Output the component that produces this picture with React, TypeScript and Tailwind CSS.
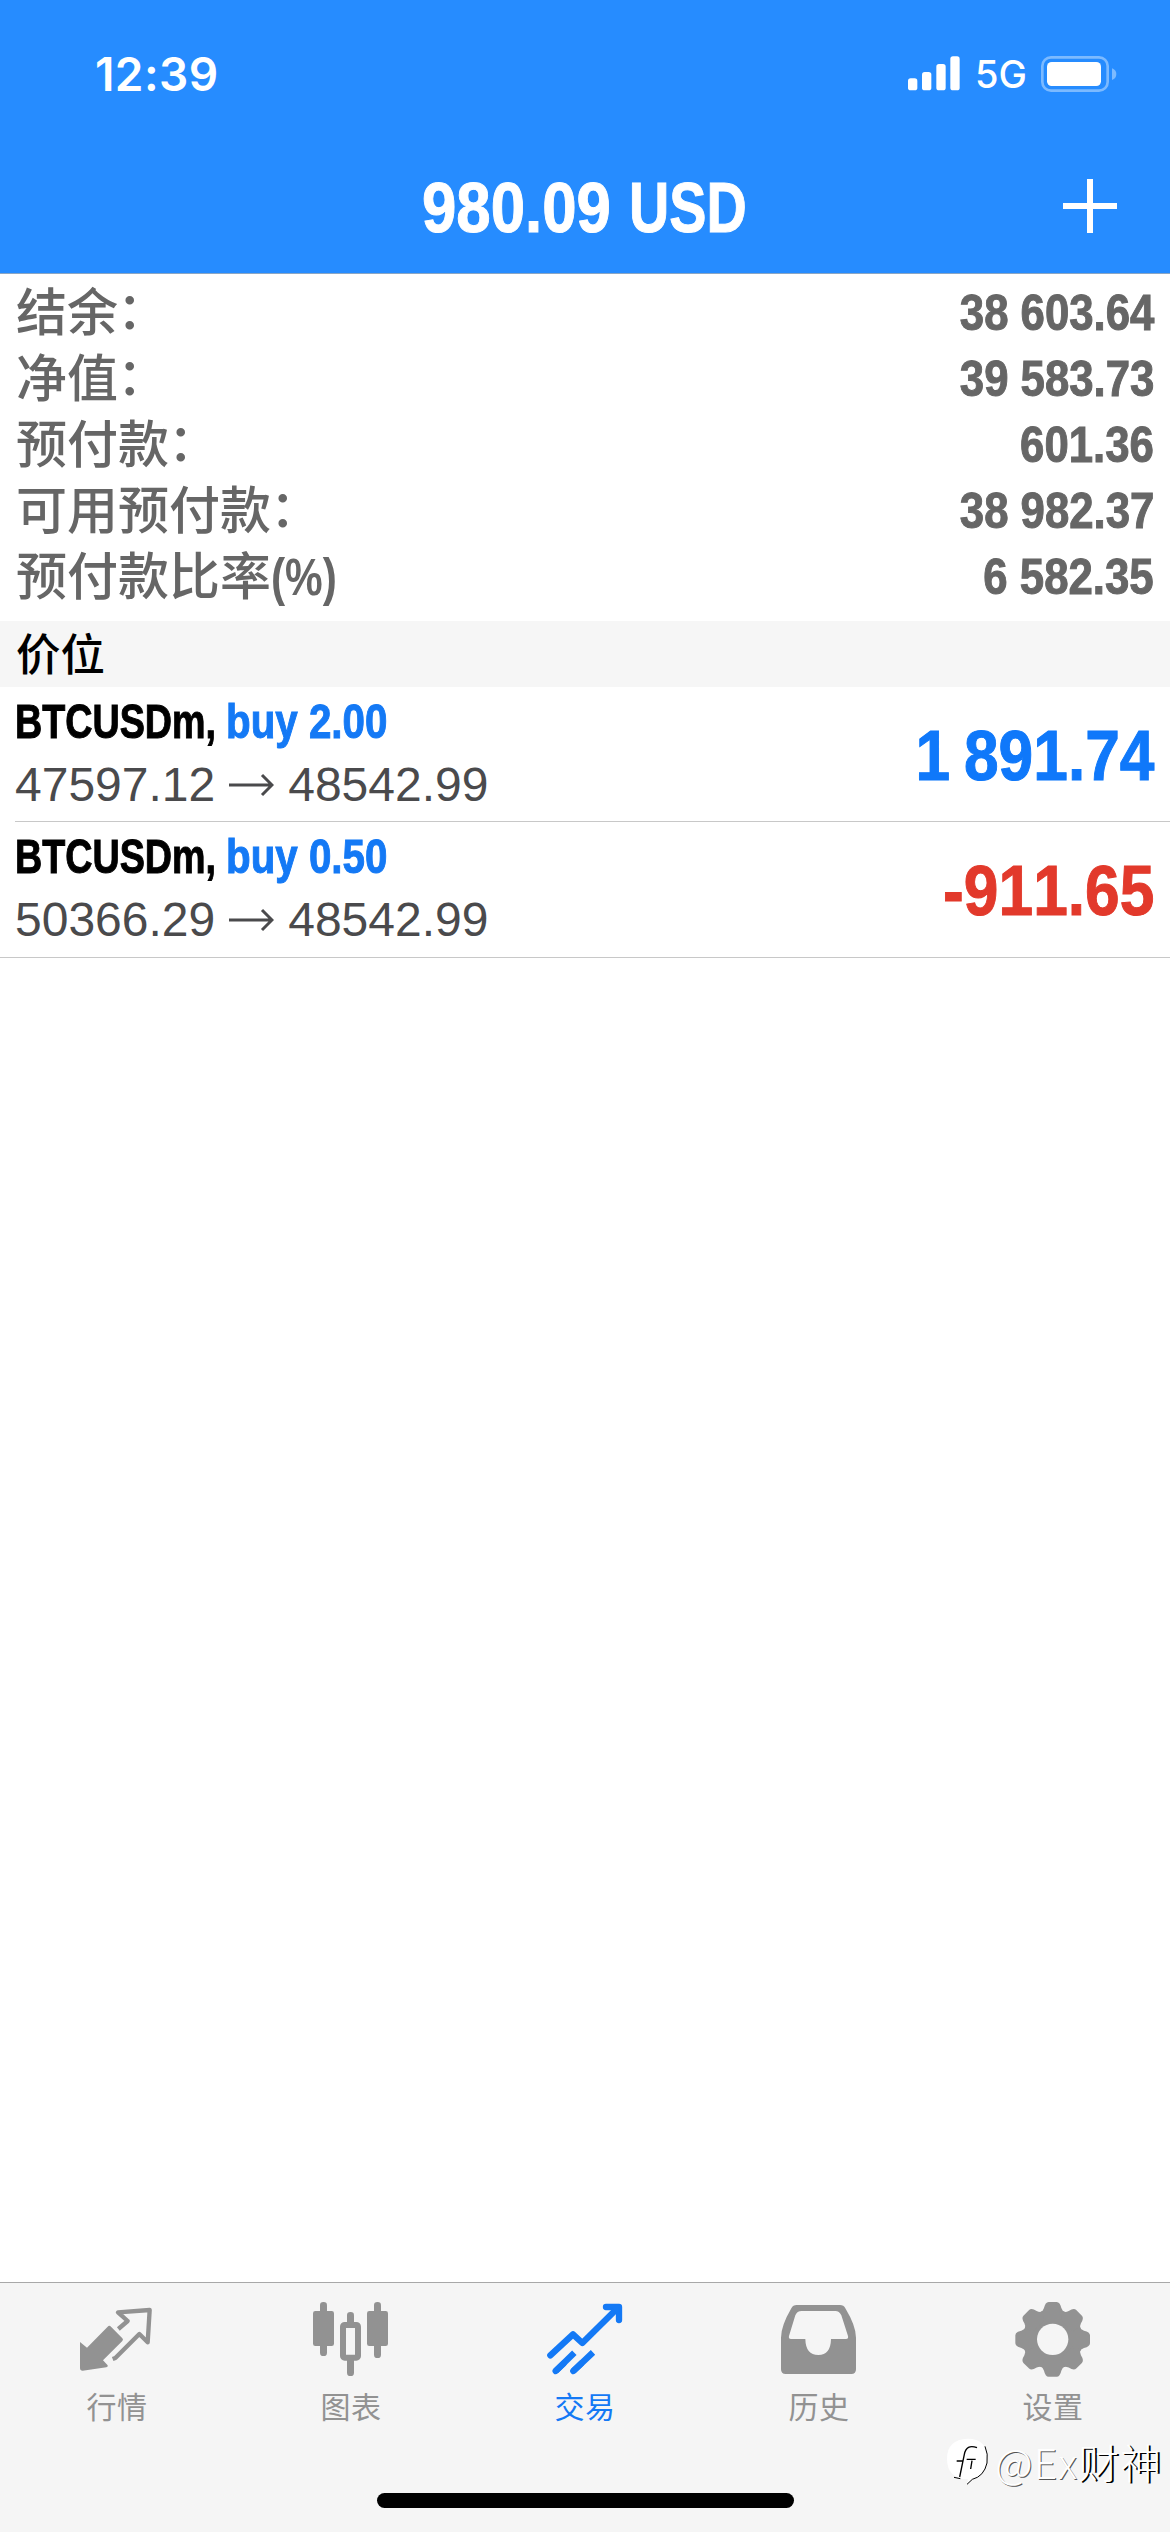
import React from "react";

interface SummaryRow {
  label: string;
  suffix: string;
  value: string;
}

interface Position {
  symbol: string;
  side: string;
  open: string;
  current: string;
  profit: string;
  positive: boolean;
}

const summary: SummaryRow[] = [
  { label: "结余", suffix: "：", value: "38 603.64" },
  { label: "净值", suffix: "：", value: "39 583.73" },
  { label: "预付款", suffix: "：", value: "601.36" },
  { label: "可用预付款", suffix: "：", value: "38 982.37" },
  { label: "预付款比率", suffix: "(%)", value: "6 582.35" },
];

const positions: Position[] = [
  { symbol: "BTCUSDm,", side: "buy 2.00", open: "47597.12", current: "48542.99", profit: "1 891.74", positive: true },
  { symbol: "BTCUSDm,", side: "buy 0.50", open: "50366.29", current: "48542.99", profit: "-911.65", positive: false },
];

const QuotesIcon = () => (
  <svg className="w-20 h-20" viewBox="111 84 240 240" fill="none">
    <path d="M120 216 L141 233 L203 170 Q208 165 213 170 L247 205 Q251 209 247 213 L189 271 L203 286 Q205 291 199 292 L128 302 Q120 302 120 294 Z" fill="currentColor" />
    <path d="M235 177 L263 153 L234 127 L329 120 L323 217 L298 192 L226 264 L218 267" stroke="currentColor" strokeWidth="13" strokeLinejoin="round" />
  </svg>
);

const ChartIcon = () => (
  <svg className="w-20 h-20" viewBox="813 84 240 240" fill="currentColor">
    <rect x="840" y="96" width="21" height="162" rx="10" />
    <rect x="819" y="123" width="63" height="105" rx="7" />
    <rect x="1002" y="96" width="21" height="168" rx="10" />
    <rect x="981" y="123" width="63" height="105" rx="7" />
    <rect x="921" y="126" width="21" height="40" rx="10" />
    <rect x="921" y="260" width="21" height="58" rx="10" />
    <rect x="909" y="165" width="45" height="98" rx="5" fill="none" stroke="currentColor" strokeWidth="18" />
  </svg>
);

const TradeIcon = () => (
  <svg className="w-20 h-20" viewBox="135 84 240 240" fill="none" stroke="currentColor" strokeWidth="19" strokeLinecap="round" strokeLinejoin="round">
    <path d="M151 256 L219 193 L247 219 L350 117" />
    <path d="M318 111 H357 V150" />
    <path d="M330 111 L357 138 V111 Z" fill="currentColor" strokeWidth="4" />
    <path d="M167 303 L190 281 M220 303 L243 281" />
    <path d="M167 303 L223 248 M220 303 L279 247" strokeLinecap="butt" />
  </svg>
);

const HistoryIcon = () => (
  <svg className="w-20 h-20" viewBox="837 84 240 240" fill="currentColor">
    <path
      fillRule="evenodd"
      d="M890 105 H1020 Q1031 105 1036 115 Q1068 168 1068 203 V298 Q1068 312 1054 312 H857 Q843 312 843 298 V203 Q843 168 874 115 Q879 105 890 105 Z M905 123 Q891 123 886 136 L867 198 Q865 207 873 207 H916 Q917 255 955 255 Q992 255 993 207 H1038 Q1046 207 1044 198 L1024 136 Q1018 123 1006 123 Z"
    />
  </svg>
);

const SettingsIcon = () => (
  <svg className="w-20 h-20" viewBox="339 84 240 240" fill="currentColor">
    <mask id="hub">
      <rect x="339" y="84" width="240" height="240" fill="white" />
      <circle cx="458" cy="208" r="47" fill="black" />
    </mask>
    <g mask="url(#hub)">
      <circle cx="458" cy="208" r="90" />
      {[0, 45, 90, 135, 180, 225, 270, 315].map((angle) => (
        <path
          key={angle}
          transform={`rotate(${angle} 458 208)`}
          d="M420 128 Q429 124 432 114 Q436 96 446 96 H470 Q480 96 484 114 Q487 124 496 128 L480 150 H436 Z"
        />
      ))}
    </g>
  </svg>
);

const tabs = [
  { label: "行情", icon: <QuotesIcon />, active: false },
  { label: "图表", icon: <ChartIcon />, active: false },
  { label: "交易", icon: <TradeIcon />, active: true },
  { label: "历史", icon: <HistoryIcon />, active: false },
  { label: "设置", icon: <SettingsIcon />, active: false },
];

const StatusBar = () => (
  <div className="h-[148px] pl-[95px] pr-[53px] flex items-center justify-between text-white">
    <span className="font-['Inter'] text-[46px] leading-[56px] font-semibold tracking-[0.4px]">12:39</span>
    <div className="flex items-center">
      <svg className="w-[52px] h-9" viewBox="110 80 156 108" fill="currentColor">
        <rect x="110" y="147" width="28" height="36" rx="8" />
        <rect x="152" y="128" width="28" height="55" rx="8" />
        <rect x="195" y="104" width="28" height="79" rx="8" />
        <rect x="237" y="81" width="28" height="102" rx="8" />
      </svg>
      <span className="ml-[15px] w-[50px] font-['Inter'] text-[38px] leading-[46px] font-medium whitespace-nowrap">5G</span>
      <svg className="ml-4 w-[76px] h-9" viewBox="510 78 228 108" fill="none">
        <rect x="514" y="82" width="196" height="100" rx="26" stroke="#7cbaff" strokeWidth="8" />
        <rect x="528" y="96" width="162" height="72" rx="14" fill="white" />
        <path d="M723 115 Q736 120 736 132 Q736 145 723 150 Z" fill="#7cbaff" />
      </svg>
    </div>
  </div>
);

const LongArrow = () => (
  <svg className="mx-[14px] w-[45px] h-6" viewBox="0 0 45 24" fill="none" stroke="currentColor" strokeWidth="3">
    <path d="M0 12 H43 M33 2 L43 12 L33 22" />
  </svg>
);

const App: React.FC = () => {
  return (
    <div className="w-[1170px] h-[2532px] flex flex-col bg-white overflow-hidden font-['Liberation_Sans','Noto_Sans_CJK_SC',sans-serif] [font-kerning:none]">
      {/* HEADER */}
      <header className="h-[274px] bg-[#268cff] border-b border-[#8aa6c4]">
        <StatusBar />
        <div className="h-[120px] grid grid-cols-[1fr_326px_1fr] items-center text-white">
          <span />
          <h1 className="flex justify-between whitespace-nowrap text-[71px] leading-[80px] font-bold [-webkit-text-stroke:1px_currentColor]">
            <span className="w-[194px] origin-left scale-x-[0.87]">980.09</span>
            <span className="w-[119px] origin-left scale-x-[0.785]">USD</span>
          </h1>
          <svg className="justify-self-end mr-[53px] mb-1 w-[54px] h-[54px]" viewBox="0 0 54 54" stroke="currentColor" strokeWidth="6">
            <path d="M0 27 H54 M27 0 V54" />
          </svg>
        </div>
      </header>

      {/* ACCOUNT SUMMARY */}
      <section className="h-[347px] pt-[7px] px-4 text-[#666666]">
        {summary.map((row) => (
          <div key={row.label} className="h-[66px] flex items-center justify-between leading-[66px]">
            <div className="flex text-[51px] font-medium">
              <span>{row.label}</span>
              {row.suffix === "：" ? (
                <span className="-translate-x-px -translate-y-[2px]">{row.suffix}</span>
              ) : (
                <span className="origin-left scale-x-[0.83] font-bold">{row.suffix}</span>
              )}
            </div>
            <span className="pb-[2px] origin-right scale-x-[0.875] text-[50px] font-bold [-webkit-text-stroke:1px_currentColor]">{row.value}</span>
          </div>
        ))}
      </section>

      <h2 className="h-[66px] pt-[2px] px-4 bg-[#f6f6f6] text-black text-[44.5px] leading-[66px] font-medium">价位</h2>

      {/* POSITIONS */}
      <section className="border-b border-[#c8c8c8]">
        {positions.map((p, i) => (
          <div key={p.open} className="pl-[15px]">
            <div className={`pr-4 flex items-center justify-between ${i > 0 ? "h-[136px] pb-px border-t border-[#c8c8c8]" : "h-[134px]"}`}>
              <div className="pb-[2px]">
                <div className="flex text-[48px] leading-[63px] font-bold whitespace-nowrap [-webkit-text-stroke:1px_currentColor]">
                  <span className="w-[211px] origin-left scale-x-[0.785] text-black">{p.symbol}</span>
                  <span className="origin-left scale-x-[0.84] text-[#1479f5]">{p.side}</span>
                </div>
                <div className="flex items-center text-[48px] leading-[63px] text-[#4a4a4c]">
                  <span>{p.open}</span>
                  <LongArrow />
                  <span>{p.current}</span>
                </div>
              </div>
              <span className={`pt-1 origin-right scale-x-[0.89] text-[70px] leading-[80px] font-bold [word-spacing:-4px] [-webkit-text-stroke:1px_currentColor] ${p.positive ? "text-[#0f78fa]" : "text-[#e2392b]"}`}>
                {p.profit}
              </span>
            </div>
          </div>
        ))}
      </section>

      {/* TAB BAR */}
      <footer className="relative mt-auto h-[250px] flex flex-col bg-[#f5f5f5] border-t border-[#a8a8a8]">
        <nav className="grid grid-cols-5 pt-[15px]">
          {tabs.map((tab) => (
            <div key={tab.label} className={`flex flex-col items-center ${tab.active ? "text-[#1479f5]" : "text-[#929292]"}`}>
              {tab.icon}
              <span className="mt-[10px] text-[30px] leading-10 tracking-[0.5px]">{tab.label}</span>
            </div>
          ))}
        </nav>
        <div className="mt-auto mb-6 mx-auto w-[417px] h-[15px] rounded-full bg-black" />

        {/* WATERMARK */}
        <div className="absolute right-[8px] bottom-[46px] flex items-center text-white">
          <svg className="w-[42px] h-12" viewBox="136 525 126 144" fill="none">
            <path d="M198 530 Q256 530 258 590 Q258 635 212 654 L196 667 L199 652 Q136 650 136 590 Q136 532 198 530 Z" fill="white" />
            <path d="M250 553 Q260 575 256 603 Q247 643 212 652 L196 667 M157 646 L176 650" stroke="black" strokeWidth="3" />
            <path d="M226 557 Q194 545 188 577 L174 645 M165 597 H185 M195 592 H222 M211 596 L207 621" stroke="black" strokeWidth="4" />
          </svg>
          <span className="ml-[6px] font-['Noto_Sans_CJK_SC',sans-serif] font-light text-[41px] leading-[50px] tracking-[1px]">
            <span className="[text-shadow:1px_1px_0_#555]">@Ex</span>
            <span className="[text-shadow:2px_1px_0_#000]">财神</span>
          </span>
        </div>
      </footer>
    </div>
  );
};

export default App;
